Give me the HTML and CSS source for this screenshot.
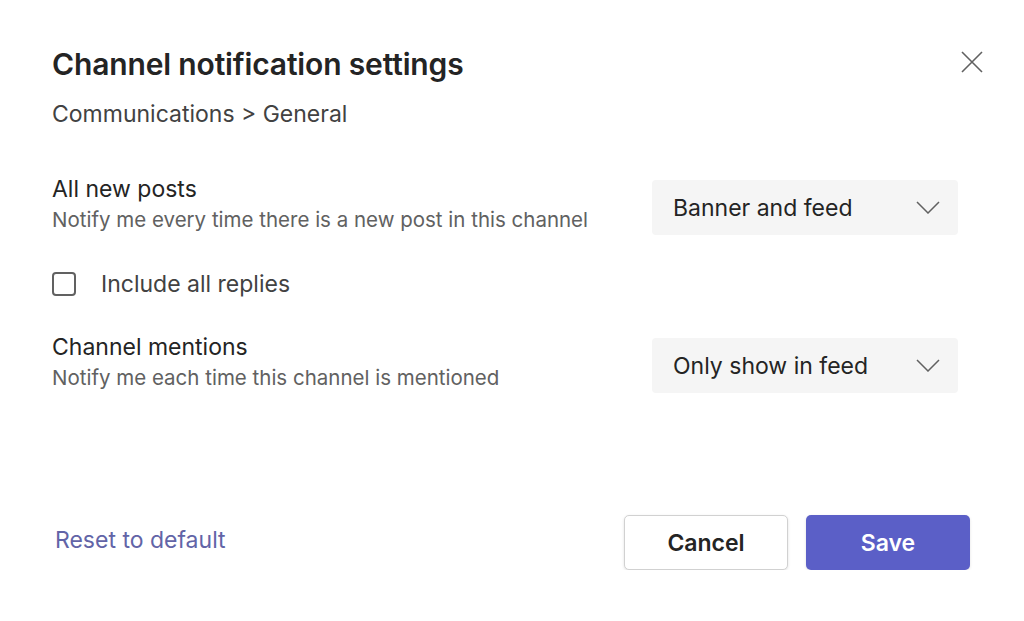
FILE: index.html
```html
<!DOCTYPE html>
<html>
  <head>
    <title>Channel notification settings</title>
    <link rel="stylesheet" href="styles.css">
  </head>
  <body>
    <div class="dialog">
      <div class="dialog-header">
        <h1 class="dialog-title">Channel notification settings</h1>
        <button class="close-button" aria-label="Close">
          <svg width="22" height="22" viewBox="0 0 22 22">
            <path d="M1 1 L21 21 M21 1 L1 21" stroke="#616161" stroke-width="1.6" fill="none" />
          </svg>
        </button>
      </div>
      <div class="breadcrumb">Communications &gt; General</div>

      <div class="setting-row" id="row-posts">
        <div class="setting-text">
          <div class="setting-name">All new posts</div>
          <div class="setting-desc">Notify me every time there is a new post in this channel</div>
        </div>
        <div class="dropdown">
          <span>Banner and feed</span>
          <svg class="chevron" width="24" height="13" viewBox="0 0 24 13">
            <path d="M1 1 L12 12 L23 1" stroke="#616161" stroke-width="1.5" fill="none" />
          </svg>
        </div>
      </div>

      <label class="check-row">
        <span class="checkbox"></span>
        <span class="check-label">Include all replies</span>
      </label>

      <div class="setting-row" id="row-mentions">
        <div class="setting-text">
          <div class="setting-name">Channel mentions</div>
          <div class="setting-desc">Notify me each time this channel is mentioned</div>
        </div>
        <div class="dropdown">
          <span>Only show in feed</span>
          <svg class="chevron" width="24" height="13" viewBox="0 0 24 13">
            <path d="M1 1 L12 12 L23 1" stroke="#616161" stroke-width="1.5" fill="none" />
          </svg>
        </div>
      </div>

      <div class="dialog-footer">
        <a class="reset-link" href="#">Reset to default</a>
        <div class="buttons">
          <button class="btn btn-cancel">Cancel</button>
          <button class="btn btn-save">Save</button>
        </div>
      </div>
    </div>
  </body>
</html>
```

FILE: styles.css
```css
body {
  margin: 0;
  background-color: #ffffff;
  font-family: Inter, "Noto Sans", sans-serif;
  color: #242424;
}

.dialog {
  padding: 46px 41px 0 52px;
  display: flex;
  flex-direction: column;
}

.dialog-header {
  display: flex;
  justify-content: space-between;
  align-items: flex-start;
}

.dialog-title {
  margin: 0;
  font-size: 30px;
  line-height: 36px;
  font-weight: 600;
  letter-spacing: -0.15px;
  color: #242424;
}

.close-button {
  border: none;
  background: none;
  padding: 0;
  margin-top: 5px;
  cursor: pointer;
}

.breadcrumb {
  margin-top: 18px;
  font-size: 23px;
  line-height: 28px;
  color: #424242;
}

.setting-row {
  display: flex;
  justify-content: space-between;
  align-items: flex-start;
  margin-right: 25px;
}

#row-posts {
  margin-top: 52px;
}

#row-mentions {
  margin-top: 40px;
}

.setting-text {
  margin-top: -4px;
}

.setting-name {
  font-size: 23px;
  line-height: 26px;
  color: #242424;
}

.setting-desc {
  margin-top: 6px;
  font-size: 20.5px;
  line-height: 24px;
  color: #616161;
}

.dropdown {
  width: 306px;
  height: 55px;
  box-sizing: border-box;
  padding: 0 18px 0 21px;
  background-color: #f5f5f5;
  border-radius: 4px;
  display: flex;
  align-items: center;
  justify-content: space-between;
  font-size: 23px;
  color: #242424;
}

.check-row {
  display: flex;
  align-items: center;
  margin-top: 35px;
}

.checkbox {
  width: 24px;
  height: 24px;
  box-sizing: border-box;
  border: 2px solid #616161;
  border-radius: 4px;
}

.check-label {
  margin-left: 25px;
  font-size: 23px;
  line-height: 28px;
  color: #424242;
}

.dialog-footer {
  margin-top: 122px;
  display: flex;
  justify-content: space-between;
  align-items: center;
  margin-right: 13px;
}

.reset-link {
  margin-left: 3px;
  margin-bottom: 6px;
  font-size: 23px;
  color: #6264a7;
  text-decoration: none;
}

.buttons {
  display: flex;
  gap: 18px;
}

.btn {
  width: 164px;
  height: 55px;
  border-radius: 5px;
  font-family: Inter, "Noto Sans", sans-serif;
  font-size: 23px;
  font-weight: 600;
  box-shadow: 0 1px 3px rgba(0, 0, 0, 0.12);
  cursor: pointer;
}

.btn-cancel {
  background-color: #ffffff;
  border: 1px solid #d1d1d1;
  color: #242424;
}

.btn-save {
  background-color: #5b5fc7;
  border: none;
  color: #ffffff;
}
```
